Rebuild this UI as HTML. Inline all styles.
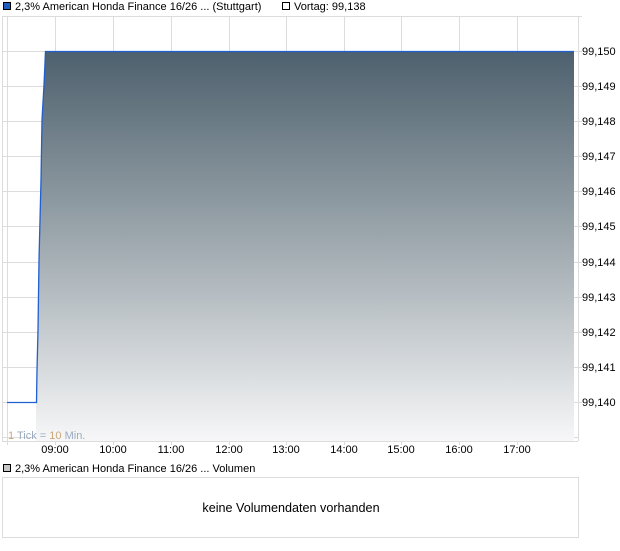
<!DOCTYPE html>
<html><head><meta charset="utf-8"><style>
body{margin:0;background:#fff;width:620px;height:546px;overflow:hidden;font-family:"Liberation Sans",sans-serif;}
svg text{font-family:"Liberation Sans",sans-serif;font-size:11px;fill:#000;}
</style></head><body>
<svg width="620" height="546" viewBox="0 0 620 546" xmlns="http://www.w3.org/2000/svg">
<defs><linearGradient id="g" x1="0" y1="0" x2="0" y2="1">
<stop offset="0" stop-color="#4d606d"/><stop offset="0.5" stop-color="#a0aab0"/><stop offset="1" stop-color="#f7f7f8"/></linearGradient></defs>
<rect x="3.5" y="2.5" width="7" height="7" fill="#1f5fbf" stroke="#000" stroke-width="1"/>
<text x="15" y="10">2,3% American Honda Finance 16/26 ... (Stuttgart)</text>
<rect x="282.5" y="2.5" width="7" height="7" fill="#fff" stroke="#000" stroke-width="1"/>
<text x="294" y="10">Vortag: 99,138</text>
<g stroke="#dcdcdc" stroke-width="1">
<line x1="2.5" y1="16" x2="2.5" y2="441"/>
<line x1="7.5" y1="16" x2="7.5" y2="445"/>
<line x1="55.5" y1="16" x2="55.5" y2="445"/><line x1="113.5" y1="16" x2="113.5" y2="445"/>
<line x1="171.5" y1="16" x2="171.5" y2="445"/><line x1="229.5" y1="16" x2="229.5" y2="445"/>
<line x1="286.5" y1="16" x2="286.5" y2="445"/><line x1="344.5" y1="16" x2="344.5" y2="445"/>
<line x1="401.5" y1="16" x2="401.5" y2="445"/><line x1="459.5" y1="16" x2="459.5" y2="445"/>
<line x1="517.5" y1="16" x2="517.5" y2="445"/>
<line x1="578.5" y1="16" x2="578.5" y2="441"/>
<line x1="2" y1="16.5" x2="582" y2="16.5"/><line x1="2" y1="51.5" x2="582" y2="51.5"/>
<line x1="2" y1="86.5" x2="582" y2="86.5"/><line x1="2" y1="121.5" x2="582" y2="121.5"/>
<line x1="2" y1="156.5" x2="582" y2="156.5"/><line x1="2" y1="191.5" x2="582" y2="191.5"/>
<line x1="2" y1="226.5" x2="582" y2="226.5"/><line x1="2" y1="262.5" x2="582" y2="262.5"/>
<line x1="2" y1="297.5" x2="582" y2="297.5"/><line x1="2" y1="332.5" x2="582" y2="332.5"/>
<line x1="2" y1="367.5" x2="582" y2="367.5"/><line x1="2" y1="402.5" x2="582" y2="402.5"/>
<line x1="2" y1="437.5" x2="578" y2="437.5"/>
<line x1="2" y1="441.5" x2="578" y2="441.5"/>
</g>
<polygon points="36,441 36,402 37,370 38,330 39,260 41,180 42,120 44,85 45,51 574,51 574,441" fill="url(#g)"/>
<polyline points="7,402.5 36.5,402.5 37,370 38,330 39,260 41,180 42,120 44,85 45.5,51.5 574,51.5" fill="none" stroke="#1f5fcf" stroke-width="1.3"/>
<g>
<text x="582" y="55">99,150</text><text x="582" y="90">99,149</text><text x="582" y="125">99,148</text>
<text x="582" y="160">99,147</text><text x="582" y="195">99,146</text><text x="582" y="230">99,145</text>
<text x="582" y="266">99,144</text><text x="582" y="301">99,143</text><text x="582" y="336">99,142</text>
<text x="582" y="371">99,141</text><text x="582" y="406">99,140</text>
</g>
<text x="8" y="439"><tspan style="fill:#c8a878">1</tspan><tspan style="fill:#9aaac0"> Tick = </tspan><tspan style="fill:#c8a878">10</tspan><tspan style="fill:#9aaac0"> Min.</tspan></text>
<g text-anchor="middle">
<text x="55" y="453">09:00</text><text x="113" y="453">10:00</text><text x="171" y="453">11:00</text>
<text x="229" y="453">12:00</text><text x="286" y="453">13:00</text><text x="344" y="453">14:00</text>
<text x="401" y="453">15:00</text><text x="459" y="453">16:00</text><text x="517" y="453">17:00</text>
</g>
<rect x="3.5" y="464.5" width="7" height="7" fill="#c8c8c8" stroke="#000" stroke-width="1"/>
<text x="15" y="472">2,3% American Honda Finance 16/26 ... Volumen</text>
<rect x="2.5" y="477.5" width="576" height="60" fill="#fff" stroke="#dcdcdc"/>
<text x="291" y="512" text-anchor="middle" style="font-size:12.6px">keine Volumendaten vorhanden</text>
</svg>
</body></html>
